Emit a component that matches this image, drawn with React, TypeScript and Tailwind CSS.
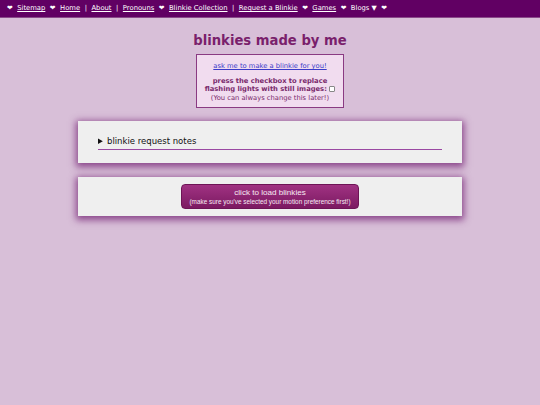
const navItems = [
  { sep: "❤", label: "Sitemap" },
  { sep: "❤", label: "Home" },
  { sep: "|", label: "About" },
  { sep: "|", label: "Pronouns" },
  { sep: "❤", label: "Blinkie Collection" },
  { sep: "|", label: "Request a Blinkie" },
  { sep: "❤", label: "Games" },
];

const NavBar = () => (
  <nav className="flex h-[18px] items-center gap-[4.5px] border-b border-[#8a4a8a] bg-[#610063] pl-[7px] font-['DejaVu_Sans',sans-serif] text-[6.8px] text-white">
    {navItems.map((item) => (
      <span key={item.label} className="flex items-center gap-[4.5px]">
        <span>{item.sep}</span>
        <a href="#" className="underline">
          {item.label}
        </a>
      </span>
    ))}
    <span>❤</span>
    <span>Blogs ▼</span>
    <span>❤</span>
  </nav>
);

const Card = ({ children, className = "" }: { children: React.ReactNode; className?: string }) => (
  <div
    className={`mx-auto w-[384px] bg-[#efefef] shadow-[0_2px_7px_2px_rgba(120,40,120,0.8)] ${className}`}
  >
    {children}
  </div>
);

export default function App() {
  return (
    <div className="min-h-[405px] bg-[#d8bfd8] font-['DejaVu_Sans',sans-serif]">
      <NavBar />
      <h1 className="mt-[14px] text-center text-[13.2px] font-bold leading-[18px] text-[#7a1f6c]">
        blinkies made by me
      </h1>
      <div className="mx-auto mt-[4px] flex w-[148px] flex-col items-center border border-[#8a3a82] bg-[#f1dcef] pb-[5px] pt-[7px] text-center text-[6.75px] leading-[8.5px]">
        <a href="#" className="text-[#3b3bc9] underline">
          ask me to make a blinkie for you!
        </a>
        <p className="mt-[6px] font-bold text-[#7a2a6c]">
          press the checkbox to replace
          <br />
          flashing lights with still images:{" "}
          <input
            type="checkbox"
            className="h-[6px] w-[6px] appearance-none rounded-[1px] border border-[#888] bg-white align-middle"
          />
        </p>
        <p className="text-[#7a2a6c]">(You can always change this later!)</p>
      </div>

      <Card className="mt-[13px] px-[20px] pb-[13px] pt-[14px]">
        <details className="text-[8.5px] leading-[12px] text-[#111]">
          <summary className="cursor-pointer">blinkie request notes</summary>
        </details>
        <div className="mt-[2px] h-px bg-[#9a48a2]" />
      </Card>

      <Card className="mt-[14px] flex justify-center py-[7px]">
        <button className="flex h-[25px] w-[178px] flex-col items-center justify-center rounded-[4px] border border-[#6e1456] bg-gradient-to-b from-[#a03282] to-[#7c1a62] font-['Liberation_Sans',sans-serif] leading-[9px] text-[#f6eaf3]">
          <span className="text-[8.1px]">click to load blinkies</span>
          <span className="text-[6.4px]">
            (make sure you've selected your motion preference first!)
          </span>
        </button>
      </Card>
    </div>
  );
}
